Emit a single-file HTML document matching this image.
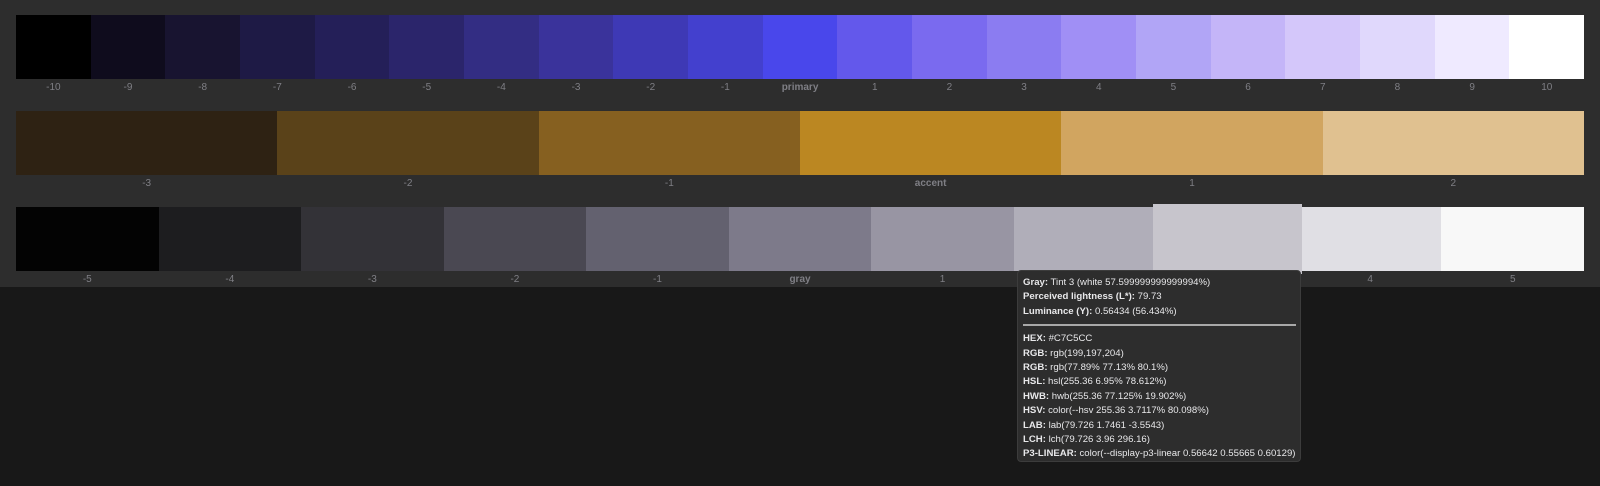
<!DOCTYPE html>
<html><head><meta charset="utf-8"><style>
html,body{margin:0;padding:0;background:#181818;width:1600px;height:486px;overflow:hidden;font-family:"Liberation Sans",Arial,sans-serif}
.panel{background:#2d2d2d;padding:15px 16px 0 16px;height:272px}
.row{display:flex;height:64px}
.row div{flex:1}
.lab{display:flex;height:16px;margin-bottom:16px;font-size:10px;line-height:18px;color:#7f7f85}
.lab span{flex:1;text-align:center}
.lab b{flex:1;text-align:center;font-weight:bold}
.hov{position:absolute;left:1153px;top:204px;width:149px;height:70px;background:#c7c5cc}
.tip{position:absolute;left:1017px;top:270px;width:277px;height:185px;background:#2d2d2d;border:1px solid #3c3c3c;border-radius:4px;padding:5px 0 0 5px;color:#e8e8ea;font-size:9.6px;line-height:14.4px;white-space:nowrap}
.tip b{font-weight:bold}
.tip hr{border:0;height:2px;background:#a8a8a8;margin:5px 4px 6px 0}
</style></head><body>
<div class="panel">
<div class="row">
<div style="background:#000"></div><div style="background:#0f0c1d"></div><div style="background:#181430"></div><div style="background:#1e1a45"></div><div style="background:#241f58"></div><div style="background:#2b256b"></div><div style="background:#332d83"></div><div style="background:#3a339b"></div><div style="background:#3e39b5"></div><div style="background:#4340ce"></div><div style="background:#4947eb"></div><div style="background:#6358eb"></div><div style="background:#7a6aef"></div><div style="background:#8b7cf1"></div><div style="background:#a08ff5"></div><div style="background:#b1a5f6"></div><div style="background:#c4b5f8"></div><div style="background:#d4c7fa"></div><div style="background:#e0d8fc"></div><div style="background:#efeaff"></div><div style="background:#fff"></div>
</div>
<div class="lab"><span>-10</span><span>-9</span><span>-8</span><span>-7</span><span>-6</span><span>-5</span><span>-4</span><span>-3</span><span>-2</span><span>-1</span><b>primary</b><span>1</span><span>2</span><span>3</span><span>4</span><span>5</span><span>6</span><span>7</span><span>8</span><span>9</span><span>10</span></div>
<div class="row">
<div style="background:#2e2213"></div><div style="background:#5a4219"></div><div style="background:#866020"></div><div style="background:#bb8722"></div><div style="background:#d1a560"></div><div style="background:#e0c190"></div>
</div>
<div class="lab"><span>-3</span><span>-2</span><span>-1</span><b>accent</b><span>1</span><span>2</span></div>
<div class="row">
<div style="background:#030303"></div><div style="background:#1d1d1f"></div><div style="background:#333237"></div><div style="background:#4a4852"></div><div style="background:#63616f"></div><div style="background:#7d7a8a"></div><div style="background:#9895a3"></div><div style="background:#b0aeb9"></div><div style="background:#c7c5cc"></div><div style="background:#e0dfe4"></div><div style="background:#f8f8f8"></div>
</div>
<div class="lab"><span>-5</span><span>-4</span><span>-3</span><span>-2</span><span>-1</span><b>gray</b><span>1</span><span>2</span><span>3</span><span>4</span><span>5</span></div>
</div>
<div class="hov"></div>
<div class="tip">
<div><b>Gray:</b> Tint 3 (white 57.599999999999994%)</div>
<div><b>Perceived lightness (L*):</b> 79.73</div>
<div><b>Luminance (Y):</b> 0.56434 (56.434%)</div>
<hr>
<div><b>HEX:</b> #C7C5CC</div>
<div><b>RGB:</b> rgb(199,197,204)</div>
<div><b>RGB:</b> rgb(77.89% 77.13% 80.1%)</div>
<div><b>HSL:</b> hsl(255.36 6.95% 78.612%)</div>
<div><b>HWB:</b> hwb(255.36 77.125% 19.902%)</div>
<div><b>HSV:</b> color(--hsv 255.36 3.7117% 80.098%)</div>
<div><b>LAB:</b> lab(79.726 1.7461 -3.5543)</div>
<div><b>LCH:</b> lch(79.726 3.96 296.16)</div>
<div><b>P3-LINEAR:</b> color(--display-p3-linear 0.56642 0.55665 0.60129)</div>
</div>
</body></html>
